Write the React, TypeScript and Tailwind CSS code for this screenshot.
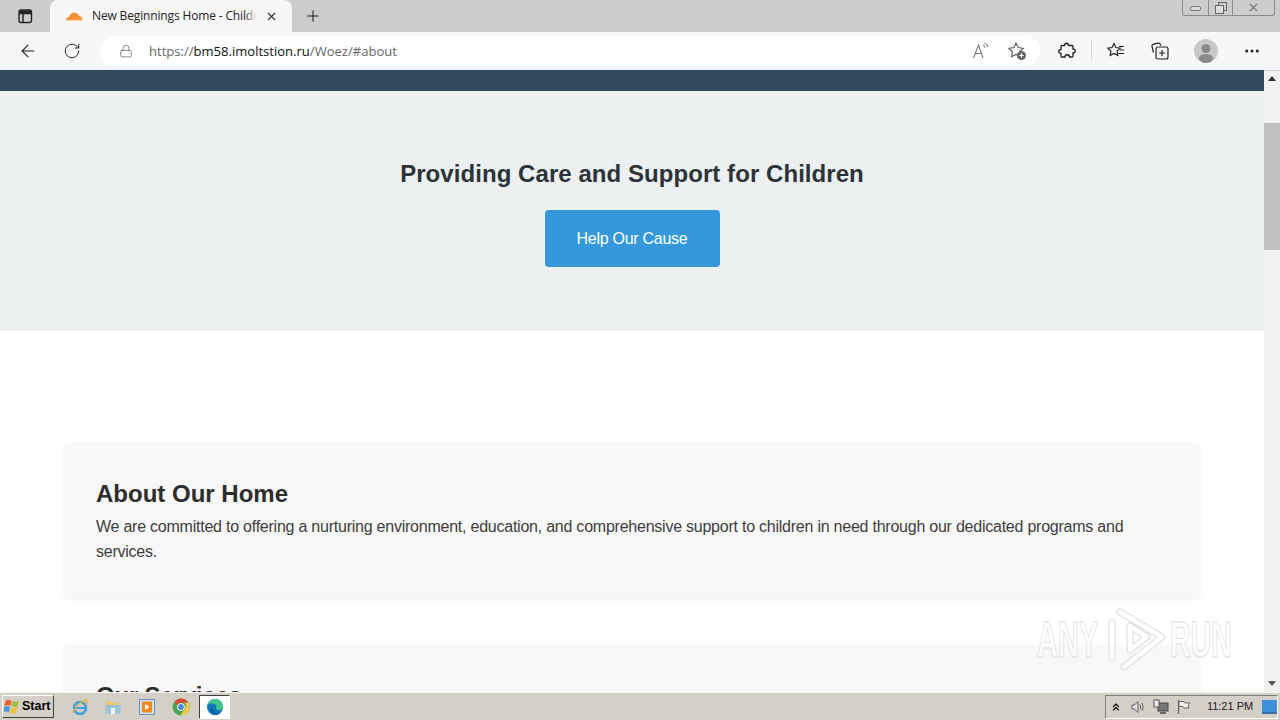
import { ArrowLeft, RotateCw, Lock, Plus, X, MoreHorizontal, ChevronsUp } from "lucide-react";

function TabIcon() {
  return (
    <svg width="16" height="16" viewBox="0 0 16 16" fill="none" stroke="#222" strokeWidth="1.4">
      <rect x="2" y="2" width="12.5" height="12.5" rx="2" />
      <path d="M2 5.5h12.5M6 5.5v9" />
      <path d="M2.5 2.5h11.5v3H2.5z" fill="#222" stroke="none" />
    </svg>
  );
}

function CloudIcon() {
  return (
    <svg width="18" height="10" viewBox="0 0 18 10">
      <path d="M1 9c0-2 1.500-3 3-3 .8-2.500 3-4.500 5.500-4.500 2.300 0 3.800 1.500 4.500 3.500 1.800 0 3.500 1.500 3.500 4z" fill="#f6913a" />
      <path d="M1 9h16.500" stroke="#f9b45f" strokeWidth="1" />
    </svg>
  );
}

function ReadAloudIcon() {
  return (
    <svg width="18" height="18" viewBox="0 0 18 18" fill="none" stroke="#777" strokeWidth="1.1">
      <path d="M1.500 16L6.500 3l4.500 13M3.200 11.500h6.200" />
      <path d="M11 3c1.300.5 2 1.500 2.300 2.700M12.500 1c1.900.7 3 2.200 3.500 4" />
    </svg>
  );
}

function FavAddIcon() {
  return (
    <svg width="20" height="20" viewBox="0 0 20 20">
      <path d="M9 2l2.200 4.600 5 .7-3.600 3.500.8 5-4.400-2.400-4.400 2.400.8-5L1.900 7.300l5-.7z" fill="none" stroke="#555" strokeWidth="1.100" />
      <circle cx="14.500" cy="14.500" r="4.500" fill="#666" />
      <path d="M14.500 12.300v4.400M12.300 14.500h4.400" stroke="#fff" strokeWidth="1.100" />
    </svg>
  );
}

function PuzzleIcon() {
  return (
    <svg width="18" height="18" viewBox="0 0 18 18" fill="none" stroke="#222" strokeWidth="1.300">
      <path d="M6.500 3.500c0-3 4-3 4 0h3.500a1 1 0 0 1 1 1V7c3 0 3 4 0 4v3a1 1 0 0 1-1 1h-2.500c0-3-4.500-3-4.500 0H4a1 1 0 0 1-1-1v-2.500c-3 0-3-4 0-4V4.500a1 1 0 0 1 1-1z" />
    </svg>
  );
}

function FavListIcon() {
  return (
    <svg width="20" height="20" viewBox="0 0 20 20" fill="none" stroke="#222" strokeWidth="1.200">
      <path d="M8 2.500l1.900 4 4.300.6-3.100 3 .7 4.300L8 12.400 4.200 14.400l.7-4.300-3.100-3 4.300-.6z" />
      <path d="M13 5.500h5M14 9h4M12.500 12.500h5.500" />
    </svg>
  );
}

function CollectionsIcon() {
  return (
    <svg width="20" height="20" viewBox="0 0 20 20" fill="none" stroke="#222" strokeWidth="1.200">
      <path d="M3.500 11.500L2 5.500a2 2 0 0 1 1.500-2.400l4.500-1a2 2 0 0 1 2.300 1.200l.4 1.200" />
      <rect x="6" y="6" width="12" height="12" rx="2" />
      <path d="M12 9v6M9 12h6" />
    </svg>
  );
}

function Avatar() {
  return (
    <svg width="24" height="24" viewBox="0 0 24 24">
      <circle cx="12" cy="12" r="12" fill="#c9c9c9" />
      <circle cx="12" cy="9.500" r="4.500" fill="#8b8b8b" />
      <path d="M4.500 19.500c1-3.500 4-4.500 7.500-4.500s6.500 1 7.500 4.500C17.500 22.500 15 24 12 24s-5.500-1.500-7.500-4.500z" fill="#8b8b8b" />
    </svg>
  );
}

function WinLogo() {
  return (
    <svg width="17" height="17" viewBox="0 0 16 16">
      <path d="M1.500 2.500c2-1 3.500-1 5.500 0L6 7.500c-2-1-3.500-1-5.500 0z" fill="#e8632a" />
      <path d="M8 2.800c2 1 3.500 1 6 0l-1.200 5c-2 1-3.500 1-5.800 0z" fill="#9cbf3c" />
      <path d="M.3 8.500c2-1 3.500-1 5.400 0l-1 5c-2-1-3.500-1-5.400 0z" fill="#4d94d8" />
      <path d="M6.700 8.800c2 1 3.500 1 5.900 0l-1.200 5c-2 1-3.500 1-5.700 0z" fill="#f2c13a" />
    </svg>
  );
}

function IeIcon() {
  return (
    <svg width="18" height="18" viewBox="0 0 18 18" fill="none">
      <circle cx="9" cy="10" r="6" stroke="#3f9fe0" strokeWidth="2.500" />
      <path d="M4 10h10" stroke="#3f9fe0" strokeWidth="2" />
      <path d="M2 15c2-6 8-12 13-13 2 0 1 3 0 5" stroke="#e9b23a" strokeWidth="1.300" />
    </svg>
  );
}

function FolderIcon() {
  return (
    <svg width="18" height="18" viewBox="0 0 18 18">
      <path d="M2 3h5l1 2h7v3H2z" fill="#e9c96a" />
      <rect x="1.500" y="7" width="15" height="9" fill="#9cc4d8" />
      <rect x="7" y="10" width="4" height="6" fill="#eef4f6" />
    </svg>
  );
}

function MediaIcon() {
  return (
    <svg width="18" height="18" viewBox="0 0 18 18">
      <rect x="1.500" y="1.500" width="15" height="15" fill="#cfe0ee" stroke="#6d94b8" />
      <rect x="4" y="3.500" width="10" height="11" rx="1" fill="#ef8a1d" />
      <path d="M7 6l4.500 3L7 12z" fill="#fff" />
    </svg>
  );
}

function ChromeIcon() {
  return (
    <svg width="18" height="18" viewBox="0 0 18 18">
      <circle cx="9" cy="9" r="8.500" fill="#4aa651" />
      <path d="M9 .5a8.500 8.500 0 0 1 7.400 4.300H9a4.300 4.300 0 0 0-4 2.600L2.700 3.500A8.500 8.500 0 0 1 9 .5z" fill="#dc4a3d" />
      <path d="M16.400 4.800A8.500 8.500 0 0 1 8.500 17.500l3.900-6.200a4.300 4.300 0 0 0 0-6.500z" fill="#f5c93e" />
      <circle cx="9" cy="9" r="3.800" fill="#fff" />
      <circle cx="9" cy="9" r="2.900" fill="#4a8be0" />
    </svg>
  );
}

function EdgeIcon() {
  return (
    <svg width="18" height="18" viewBox="0 0 18 18">
      <circle cx="9" cy="9" r="8" fill="#1177bb" />
      <path d="M1.500 7C3 2.500 6 1 9 1c4.500 0 8 3 8 7.500 0 2.500-2 3.500-4 3.500-1.500 0-3-.6-3-1.500 1-1 .8-3.800-2-4.500C5 5.300 3 5.500 1.500 7z" fill="#3ec98b" />
      <path d="M6.500 9.500c0 3.500 3 6.500 8 5.500-1.500 1.500-3.500 2-5.500 2-1.800 0-3.500-1-4.500-2.500-1-2-.5-4 2-5z" fill="#0d5ea8" />
    </svg>
  );
}

function SpeakerIcon() {
  return (
    <svg width="16" height="16" viewBox="0 0 16 16" fill="none" stroke="#666" strokeWidth="1">
      <path d="M2 6h2.500L8 2.500v11L4.500 10H2z" fill="#ddd" />
      <path d="M10 5.500c.8 1.500.8 3.500 0 5M12 4c1.300 2.500 1.300 5.500 0 8" />
    </svg>
  );
}

function NetworkIcon() {
  return (
    <svg width="16" height="16" viewBox="0 0 16 16">
      <rect x="5" y="4" width="10" height="8" fill="#777" stroke="#444" />
      <rect x="1" y="1" width="5" height="7" fill="#eee" stroke="#555" />
      <path d="M7 14h6" stroke="#444" strokeWidth="1.500" />
    </svg>
  );
}

function FlagIcon() {
  return (
    <svg width="16" height="16" viewBox="0 0 16 16" fill="none" stroke="#666" strokeWidth="1">
      <path d="M2.500 1v14" strokeWidth="1.300" />
      <path d="M3 2.500h5l1 1.500h5l-2 2.500 1 2.500H8L7 7.500H3z" fill="#f2f2f2" />
    </svg>
  );
}

function Watermark() {
  const bands = "M5 14v36 M13 4l42 25 M55 29L17 59 M23 18v24l17-13z";
  return (
    <div className="pointer-events-none absolute left-[1037px] top-[608px] flex h-[64px] items-center">
      <span className="w-[62px] origin-left scale-x-[0.58] text-[50px] font-bold leading-none text-white/70 [-webkit-text-stroke:1px_#dcdcdc]">ANY</span>
      <svg width="60" height="64" viewBox="0 0 60 64" fill="none" strokeLinecap="round" strokeLinejoin="round" className="ml-[8px]">
        <path d={bands} stroke="#e0e0e0" strokeWidth="7" />
        <path d={bands} stroke="#ffffff" strokeWidth="4.500" />
      </svg>
      <span className="ml-[3px] w-[62px] origin-left scale-x-[0.57] text-[50px] font-bold leading-none text-white/70 [-webkit-text-stroke:1px_#dcdcdc]">RUN</span>
    </div>
  );
}

export default function App() {
  return (
    <div className="relative flex h-[720px] w-[1280px] flex-col overflow-hidden bg-white font-['Liberation_Sans',sans-serif]">
      {/* Tab strip */}
      <div className="flex h-[32px] shrink-0 items-center bg-[#cccccc]">
        <div className="flex w-[50px] justify-center">
          <TabIcon />
        </div>
        <div className="flex h-[32px] w-[242px] items-center rounded-t-lg bg-[#f7f7f7] pl-[15px] pr-[14px]">
          <CloudIcon />
          <div className="relative ml-[9px] w-[165px] overflow-hidden">
            <span className="block whitespace-nowrap text-[12px] tracking-[-0.15px] text-[#222] [font-family:'Open_Sans',sans-serif]">New Beginnings Home - Childr</span>
            <div className="absolute inset-y-0 right-0 w-[12px] bg-gradient-to-r from-transparent to-[#f7f7f7]" />
          </div>
          <X size={13} strokeWidth={2} className="ml-auto text-[#333]" />
        </div>
        <Plus size={18} strokeWidth={1.4} className="ml-[12px] text-[#222]" />
        {/* Window controls */}
        <div className="mb-[16px] ml-auto mr-[5px] flex h-[16px] items-center rounded-b-[3px] border border-t-0 border-[#8a8a8a] bg-[#cdcdcd]">
          <div className="flex h-full w-[25px] items-center justify-center">
            <div className="mt-[2px] h-[5px] w-[11px] rounded-[2px] border border-[#777] bg-[#ddd]" />
          </div>
          <div className="flex h-full w-[25px] items-center justify-center border-x border-[#8a8a8a]">
            <svg width="12" height="12" viewBox="0 0 12 12" fill="none" stroke="#666">
              <rect x="3.500" y="0.500" width="8" height="8" />
              <rect x="0.500" y="3.500" width="8" height="8" fill="#ddd" />
            </svg>
          </div>
          <div className="flex h-full w-[41px] items-center justify-center">
            <X size={13} strokeWidth={2} className="text-[#777]" />
          </div>
        </div>
      </div>

      {/* Toolbar */}
      <div className="flex h-[38px] shrink-0 items-center border-b-4 border-[#f1f4fb] bg-[#f7f7f7] pt-[4px]">
        <ArrowLeft size={20} strokeWidth={1.3} className="ml-[18px] text-[#222]" />
        <RotateCw size={18} strokeWidth={1.3} className="ml-[25px] text-[#222]" />
        <div className="ml-[19px] flex h-[30px] w-[940px] items-center rounded-full bg-white pl-[19px] pr-[13px]">
          <Lock size={14} strokeWidth={1.3} className="text-[#666]" />
          <span className="ml-[16px] whitespace-nowrap pt-[1px] text-[13.05px] text-[#666] [font-family:'Open_Sans',sans-serif]">
            https://<span className="text-[#111]">bm58.imoltstion.ru</span>/Woez/#about
          </span>
          <div className="ml-auto flex items-center gap-[17px]">
            <ReadAloudIcon />
            <FavAddIcon />
          </div>
        </div>
        <div className="ml-[18px] flex items-center">
          <PuzzleIcon />
          <div className="ml-[15px] h-[20px] w-px bg-[#d8d8d8]" />
          <div className="ml-[14px]"><FavListIcon /></div>
          <div className="ml-[24px]"><CollectionsIcon /></div>
          <div className="ml-[24px]"><Avatar /></div>
          <MoreHorizontal size={18} strokeWidth={2} className="ml-[25px] text-[#222]" />
        </div>
      </div>

      {/* Viewport */}
      <div className="flex min-h-0 flex-1">
        <div className="min-w-0 flex-1 overflow-hidden">
          <div className="h-[21px] bg-[#34495e]" />
          <section className="flex h-[240px] flex-col items-center bg-[#ecf0f1] pt-[67px]">
            <h2 className="text-[24px] font-bold leading-[32px] tracking-[0.06px] text-[#2c3338]">Providing Care and Support for Children</h2>
            <a className="mt-[20px] flex h-[57px] w-[175px] items-center justify-center rounded-[4px] bg-[#3498db] text-[16px] tracking-[-0.28px] text-white">Help Our Cause</a>
          </section>
          <main className="flex flex-col gap-[48px] px-[64px] pt-[112px]">
            <div className="h-[154px] rounded-[4px] bg-[#f8f8f8] p-[32px] pt-[33px] shadow-[0_2px_5px_rgba(0,0,0,0.06)]">
              <h3 className="text-[24px] font-bold leading-[36px] text-[#2d2d2d]">About Our Home</h3>
              <p className="mt-[2px] text-[16px] leading-[25px] tracking-[-0.235px] text-[#3d3d3d]">We are committed to offering a nurturing environment, education, and comprehensive support to children in need through our dedicated programs and services.</p>
            </div>
            <div className="h-[154px] rounded-[4px] bg-[#f8f8f8] p-[32px] pt-[33px] shadow-[0_2px_5px_rgba(0,0,0,0.06)]">
              <h3 className="text-[24px] font-bold leading-[36px] tracking-[-0.2px] text-[#2d2d2d]">Our Services</h3>
            </div>
          </main>
        </div>
        {/* Scrollbar */}
        <div className="flex w-[16px] shrink-0 flex-col items-center border-t border-[#d4d4d4] bg-[#f1f1f1]">
          <div className="mt-[5px] h-0 w-0 border-x-[4px] border-b-[5px] border-x-transparent border-b-[#333]" />
          <div className="mt-[42px] h-[127px] w-full bg-[#c1c1c1]" />
          <div className="mb-[6px] mt-auto h-0 w-0 border-x-[4px] border-t-[5px] border-x-transparent border-t-[#555]" />
        </div>
      </div>

      {/* Taskbar */}
      <div className="flex h-[28px] shrink-0 items-center border-t border-t-[#f4f2ec] bg-[#d4d0c8]">
        <div className="ml-[2px] flex h-[23px] w-[52px] items-center border border-t-white border-l-white border-r-[#404040] border-b-[#404040] pl-[1px]">
          <WinLogo />
          <span className="ml-[1px] text-[12.5px] font-bold text-black">Start</span>
        </div>
        <div className="ml-[17px] flex items-center">
          <IeIcon />
          <div className="ml-[15px]"><FolderIcon /></div>
          <div className="ml-[16px]"><MediaIcon /></div>
          <div className="ml-[16px]"><ChromeIcon /></div>
          <div className="ml-[9px] flex h-[24px] w-[31px] items-center justify-center border border-t-[#404040] border-l-[#404040] border-r-white border-b-white bg-white">
            <EdgeIcon />
          </div>
        </div>
        <div className="ml-auto mr-[2px] flex h-[24px] w-[173px] items-center border border-t-[#808080] border-l-[#808080] border-r-white border-b-white pl-[4px]">
          <ChevronsUp size={12} strokeWidth={2.5} className="text-[#111]" />
          <div className="ml-[8px] flex items-center gap-[7px]">
            <SpeakerIcon />
            <NetworkIcon />
            <FlagIcon />
          </div>
          <span className="ml-[15px] whitespace-nowrap text-[11px] text-[#222]">11:21 PM</span>
          <div className="ml-[9px] h-[14px] w-[15px] border-b-2 border-[#3c6ea5] bg-[#3f8fd8]" />
        </div>
      </div>

      <Watermark />
    </div>
  );
}
